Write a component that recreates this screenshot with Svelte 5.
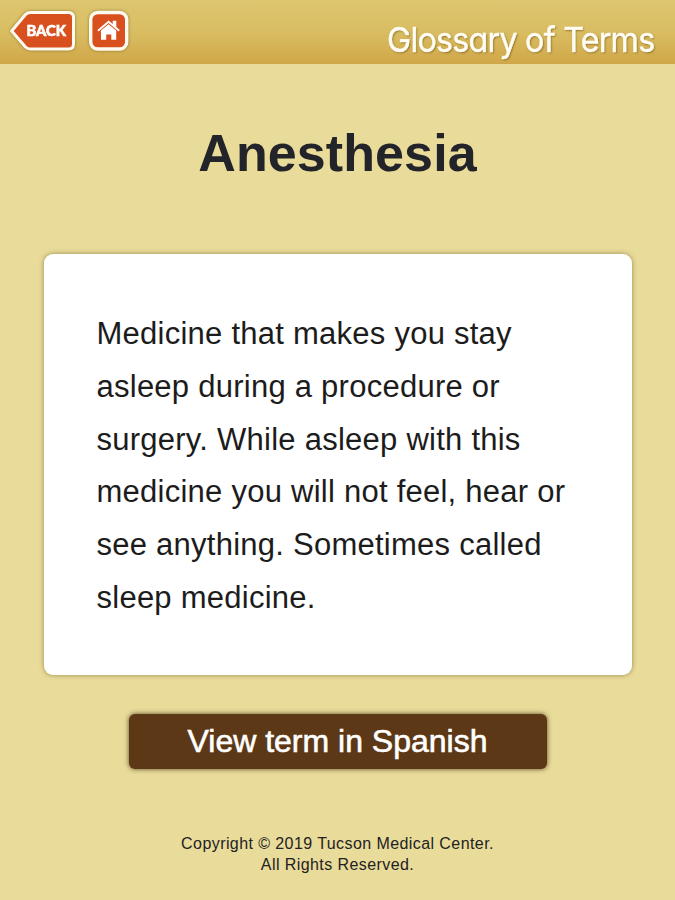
<script lang="ts">
	const term = {
		title: 'Anesthesia',
		definition:
			'Medicine that makes you stay asleep during a procedure or surgery. While asleep with this medicine you will not feel, hear or see anything. Sometimes called sleep medicine.'
	};
</script>

<div class="page">
	<header>
		<nav>
			<button class="back" aria-label="Back">
				<svg width="68" height="44" viewBox="0 0 68 44">
					<path
						d="M2.700 22 16.500 5.500Q18.500 3.500 21 3.500H59.500Q64.500 3.500 64.500 8.500V35Q64.500 40 59.500 40H21Q18.500 40 16.500 38Z"
						fill="#d9501f"
						stroke="#fffaf0"
						stroke-width="3"
						stroke-linejoin="round"
					/>
					<text x="17.500" y="27.300" textLength="39.500" lengthAdjust="spacingAndGlyphs">BACK</text>
				</svg>
			</button>
			<button class="home" aria-label="Home">
				<svg width="44" height="44" viewBox="0 0 44 44">
					<rect x="3.700" y="3.500" width="36" height="36.500" rx="7" fill="#d9501f" stroke="#fffaf0" stroke-width="3.400" />
					<path d="M11 21.800 21.600 12.800 32.200 21.800" fill="none" stroke="#fff" stroke-width="1.800" />
					<path d="M25.700 11.800h3.600v6.800l-3.600-3.200z" fill="#fff" />
					<path d="M14 21.500 21.600 15.200 29.200 21.500V30.800H24.300V25.500H19.200V30.800H14Z" fill="#fff" />
				</svg>
			</button>
		</nav>
		<div class="heading">Glossary of Terms</div>
	</header>

	<h1>{term.title}</h1>

	<main>
		<p>{term.definition}</p>
	</main>

	<button class="translate"><span>View term in Spanish</span></button>

	<footer>
		Copyright © 2019 Tucson Medical Center.<br />
		All Rights Reserved.
	</footer>
</div>

<style>
	:global(body) {
		background: #e9db9a;
	}

	.page {
		display: flex;
		flex-direction: column;
		align-items: center;

		box-sizing: border-box;
		height: 900px;
		overflow: hidden;

		background: #e9db9a;
		color: #222;
		font-family: "Liberation Sans", Arial, sans-serif;
	}

	button {
		border: none;
		padding: 0;
		background: none;
		font-family: inherit;
		cursor: pointer;
	}

	header {
		display: flex;
		justify-content: space-between;

		box-sizing: border-box;
		width: 100%;
		height: 64px;
		padding: 9px 21px 0 9px;

		background: linear-gradient(#ddc66f, #d9bd62 50%, #d0a748);
	}

	nav {
		display: flex;
		gap: 10px;
	}

	nav svg {
		display: block;
		filter: drop-shadow(0 0 1.500px rgba(100, 75, 10, .6));
	}

	nav text {
		fill: #fff;
		stroke: #fff;
		stroke-width: .6px;
		font: 900 15px Lato, sans-serif;
	}

	nav button {
		height: 44px;
	}

	.heading {
		margin-top: 9px;

		color: #fffdf4;
		font: 400 34.500px/44px Inter, sans-serif;
		font-feature-settings: "cv11";
		letter-spacing: -.9px;
		text-shadow: 1px 1px 2px rgba(110, 80, 10, .7);
		-webkit-text-stroke: .5px #fffdf4;
		white-space: nowrap;

		transform: scaleX(.94);
		transform-origin: right;
	}

	h1 {
		margin: 59px 0 0;
		font-size: 52px;
		line-height: 60px;
		letter-spacing: .1px;
		color: #23242a;
	}

	main {
		box-sizing: border-box;
		width: 588px;
		height: 421px;
		margin-top: 71px;
		padding: 54px 53px 0;

		background: #fff;
		border-radius: 9px;
		box-shadow: 0 0 5px rgba(100, 85, 20, .6);
	}

	p {
		margin: 0;
		color: #1c1c1c;
		font-size: 31px;
		line-height: 52.800px;
		letter-spacing: .25px;
	}

	.translate {
		width: 418px;
		height: 55px;
		margin-top: 39px;

		background: #5c3817;
		border-radius: 6px;
		box-shadow: 0 0 5px rgba(50, 35, 5, .8);

		color: #fff;
		font-size: 32px;
		line-height: 53px;
		-webkit-text-stroke: .6px #fff;
	}

	footer {
		margin-top: 64px;
		font-size: 16px;
		line-height: 21px;
		letter-spacing: .42px;
		text-align: center;
	}
</style>
